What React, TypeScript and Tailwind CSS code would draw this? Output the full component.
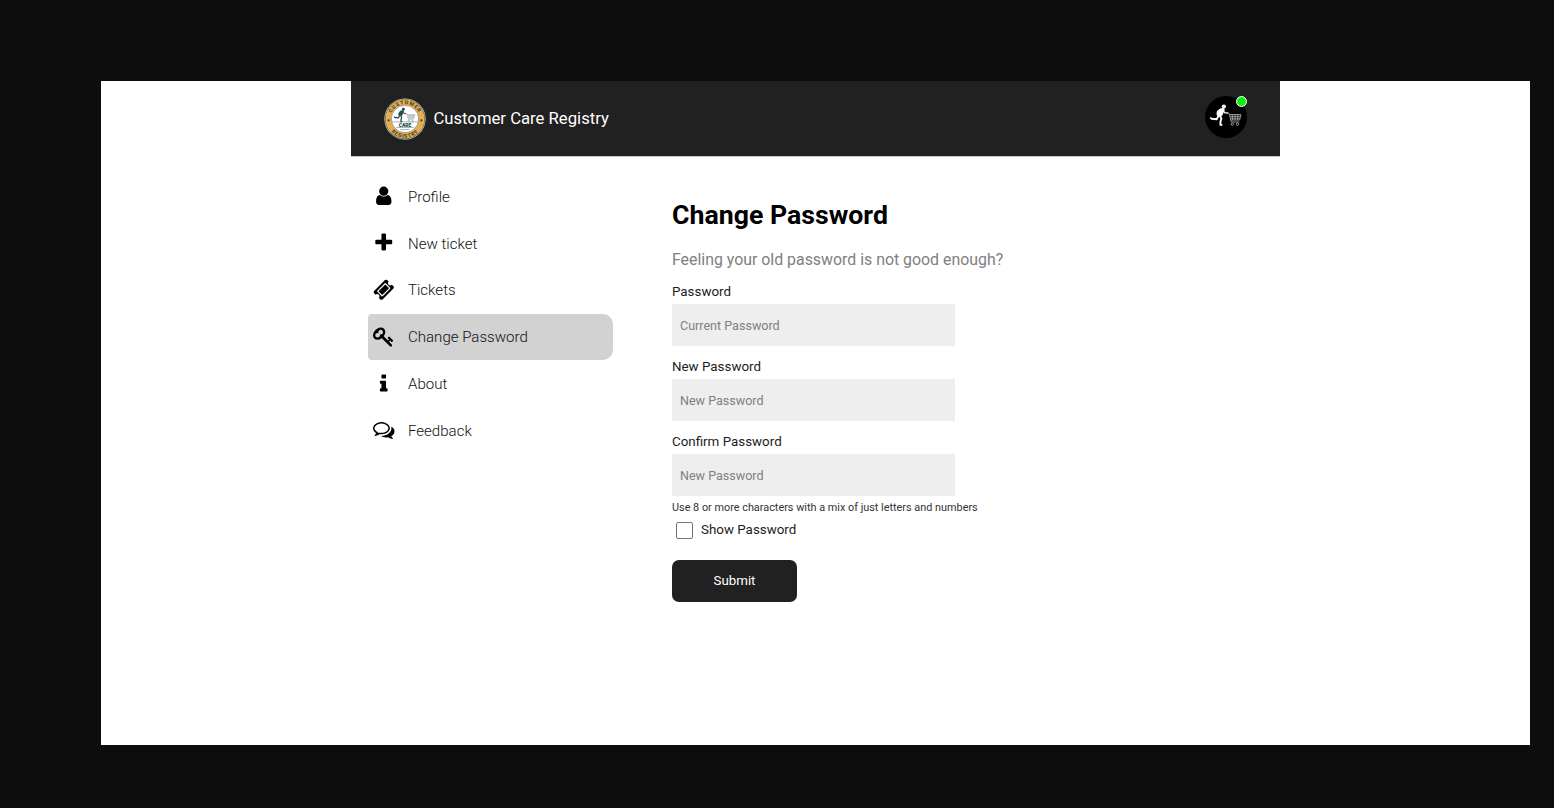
import React from "react";

const icons = {
  user: "M1536 1399q0 109-62.5 187t-150.5 78h-854q-88 0-150.5-78t-62.5-187q0-85 8.5-160.5t31.5-152 58.5-131 94-89 134.5-34.5q131 128 313 128t313-128q76 0 134.5 34.5t94 89 58.5 131 31.5 152 8.5 160.5zm-256-887q0 159-112.5 271.5t-271.5 112.5-271.5-112.5-112.5-271.5 112.5-271.5 271.5-112.5 271.5 112.5 112.5 271.5z",
  plus: "M1600 736v192q0 40-28 68t-68 28h-416v416q0 40-28 68t-68 28h-192q-40 0-68-28t-28-68v-416h-416q-40 0-68-28t-28-68v-192q0-40 28-68t68-28h416v-416q0-40 28-68t68-28h192q40 0 68 28t28 68v416h416q40 0 68 28t28 68z",
  ticket: "M1024 452l316 316-572 572-316-316zm-211 979l618-618q19-19 19-45t-19-45l-362-362q-18-18-45-18t-45 18l-618 618q-19 19-19 45t19 45l362 362q18 18 45 18t45-18zm889-637l-907 908q-37 37-90.5 37t-90.5-37l-126-126q56-56 56-136t-56-136-136-56-136 56l-125-126q-37-37-37-90.5t37-90.5l907-906q37-37 90.5-37t90.5 37l125 125q-56 56-56 136t56 136 136 56 136-56l126 125q37 37 37 90.5t-37 90.5z",
  key: "M832 512q0-80-56-136t-136-56-136 56-56 136q0 42 19 83-41-19-83-19-80 0-136 56t-56 136 56 136 136 56 136-56 56-136q0-42-19-83 41 19 83 19 80 0 136-56t56-136zm851 704q0 17-49 66t-66 49q-9 0-28.5-16t-36.5-33-38.5-40-24.5-26l-96 96 220 220q28 28 28 68 0 42-39 81t-81 39q-40 0-68-28l-671-671q-176 131-365 131-163 0-265.5-102.5t-102.5-265.5q0-160 95-313t248-248 313-95q163 0 265.5 102.5t102.5 265.5q0 189-131 365l355 355 96-96q-3-3-26-24.5t-40-38.5-33-36.5-16-28.5q0-17 49-66t66-49q13 0 23 10 6 6 46 44.5t82 79.5 86.5 86 73 78 28.5 41z",
  info: "M1216 1344v128q0 26-19 45t-45 19h-512q-26 0-45-19t-19-45v-128q0-26 19-45t45-19h64v-384h-64q-26 0-45-19t-19-45v-128q0-26 19-45t45-19h384q26 0 45 19t19 45v576h64q26 0 45 19t19 45zm-128-1152v192q0 26-19 45t-45 19h-256q-26 0-45-19t-19-45v-192q0-26 19-45t45-19h256q26 0 45 19t19 45z",
  comments: "M704 384q-153 0-286 52t-211.5 141-78.5 191q0 82 53 158t149 132l97 56-35 84q34-20 62-39l44-31 53 10q78 14 153 14 153 0 286-52t211.5-141 78.5-191-78.5-191-211.5-141-286-52zm0-128q191 0 353.5 68.5t256.5 186.5 94 257-94 257-256.5 186.5-353.5 68.5q-86 0-176-16-124 88-278 128-36 9-86 16h-3q-11 0-20.5-8t-11.5-21q-1-3-1-6.5t.5-6.5 2-6l2.5-5 3.5-5.5 4-5 4.5-5 4-4.5q5-6 23-25t26-29.5 22.5-29 25-38.5 20.5-44q-124-72-195-177t-71-224q0-139 94-257t256.5-186.5 353.5-68.5zm822 1169q10 24 20.5 44t25 38.5 22.5 29 26 29.5 23 25q1 1 4 4.5t4.5 5 4 5 3.5 5.5l2.5 5 2 6 .5 6.5-1 6.5q-3 14-13 22t-22 7q-50-7-86-16-154-40-278-128-90 16-176 16-271 0-472-132 58 4 88 4 161 0 309-45t264-129q125-92 192-212t67-254q0-77-23-152 129 71 204 178t75 230q0 120-71 224.5t-195 176.5z",
};

const menu: { label: string; icon: keyof typeof icons; active?: boolean }[] = [
  { label: "Profile", icon: "user" },
  { label: "New ticket", icon: "plus" },
  { label: "Tickets", icon: "ticket" },
  { label: "Change Password", icon: "key", active: true },
  { label: "About", icon: "info" },
  { label: "Feedback", icon: "comments" },
];

const fields = [
  { label: "Password", placeholder: "Current Password" },
  { label: "New Password", placeholder: "New Password" },
  { label: "Confirm Password", placeholder: "New Password" },
];

/* Runner pushing a shopping cart, drawn in a 42x42 box. */
function Shopper({ runner, cart }: { runner: string; cart: string }) {
  return (
    <g>
      <circle cx="18.900" cy="10.600" r="2.100" fill={runner} />
      <path d="M14.800 12.900q2.200-1.400 4.400-.6l.4 1.600-2.300 5.600-3.600 1.500-2-1.700 1.400-3.800z" fill={runner} />
      <g fill="none" stroke={runner} strokeLinecap="round" strokeLinejoin="round">
        <path d="M15.300 13.200l-2.800 2.300-.3 2.700" strokeWidth="1.400" />
        <path d="M18.300 14l1 2.600 3.300.4" strokeWidth="1.400" />
        <path d="M13.600 19.600l-1.800 3.600-5.100-.4-.8-.7" strokeWidth="1.900" />
        <path d="M14.800 19.300l1.600 3.200-.9 3-.1 3.400h1.200" strokeWidth="1.900" />
      </g>
      <g fill="none" stroke={cart} strokeWidth=".8">
        <path d="M22.500 17.300h1.600l2.200 8.700h8M24.400 18.500h11.600l-1.400 5.500h-8.800M24.900 20.300h10.600M25.400 22.200h9.700M27.200 18.500l.4 5.500M30 18.500v5.500M33 18.500l-.5 5.500" />
        <circle cx="27.300" cy="28.200" r="1.200" />
        <circle cx="32.500" cy="28.200" r="1.200" />
      </g>
    </g>
  );
}

function Logo() {
  return (
    <svg viewBox="0 0 42 42" className="h-[42px] w-[42px] shrink-0">
      <defs>
        <path id="arc-top" d="M6.200 21a14.800 14.800 0 0 1 29.600 0" />
        <path id="arc-bottom" d="M2.300 21a18.700 18.700 0 0 0 37.400 0" />
      </defs>
      <circle cx="21" cy="21" r="20.600" fill="#e5e0cb" />
      <circle cx="21" cy="21" r="20.100" fill="#4b6058" />
      <circle cx="21" cy="21" r="19.500" fill="#e6ad52" />
      <circle cx="21" cy="21" r="13.700" fill="#fff" stroke="#78856f" strokeWidth=".7" />
      <g fontFamily="Roboto, sans-serif" fontWeight="900" fill="#4a4a35" textAnchor="middle">
        <text fontSize="5.200" letterSpacing=".8">
          <textPath href="#arc-top" startOffset="50%">CUSTOMER</textPath>
        </text>
        <text fontSize="5.200" letterSpacing=".8">
          <textPath href="#arc-bottom" startOffset="50%">REGISTRY</textPath>
        </text>
        <text x="21" y="28.600" fontSize="5" fill="#26484a">CARE</text>
      </g>
      <circle cx="4.700" cy="22.400" r="1.100" fill="#4a3b20" />
      <circle cx="37.300" cy="22.400" r="1.100" fill="#4a3b20" />
      <path d="M8 23.900h26M12 29.500h18M16.500 31.500h9" stroke="#6f8b8c" strokeWidth=".6" />
      <g transform="translate(6.500 4) scale(.68)">
        <Shopper runner="#264b50" cart="#8aa3a5" />
      </g>
    </svg>
  );
}

export default function App() {
  return (
    <div className="h-[808px] w-[1554px] overflow-hidden bg-[#0d0d0d] pt-[81px] pl-[101px] font-[Roboto,sans-serif]">
      <div className="h-[664px] w-[1429px] bg-white pl-[250px]">
        <div className="w-[929px]">
          <header className="flex h-[75px] items-center justify-between bg-[#212121] pr-[33px] pl-[33.400px] shadow-[0_1px_0_#c8c8c8]">
            <div className="flex items-center gap-[7px]">
              <Logo />
              <h1 className="text-[16.700px] leading-5 text-white">Customer Care Registry</h1>
            </div>
            <div className="relative -mt-1 h-[42px] w-[42px]">
              <svg viewBox="0 0 42 42" className="h-[42px] w-[42px]">
                <circle cx="21" cy="21" r="21" fill="#000" />
                <Shopper runner="#fff" cart="#b0b0b0" />
              </svg>
              <span className="absolute top-0 right-0 h-[11px] w-[11px] rounded-full border border-white bg-[#10f010]" />
            </div>
          </header>

          <div className="flex">
            <nav className="w-[262px] pt-[17.200px] pl-[17px]">
              {menu.map((m) => (
                <a
                  key={m.label}
                  className={`flex h-[46.8px] items-center rounded-l-[4px] rounded-r-[10px] pl-[5px] ${m.active ? "bg-[#d2d2d2]" : ""}`}
                >
                  <svg viewBox="0 0 1792 1792" className="-mt-px h-[21.500px] w-[21.500px] shrink-0 fill-black">
                    <path d={icons[m.icon]} />
                  </svg>
                  <span className="ml-[13.500px] pt-[0.800px] text-[15.050px] font-light text-[#111]">{m.label}</span>
                </a>
              ))}
            </nav>

            <main className="ml-[59px] pt-[40px]">
              <h2 className="text-[26.700px] leading-[38px] font-bold text-black">Change Password</h2>
              <p className="mt-[16px] text-[15.880px] leading-5 text-[#808080]">
                Feeling your old password is not good enough?
              </p>
              <form className="mt-[13px]">
                {fields.map((f) => (
                  <label key={f.label} className="block h-[75px]">
                    <span className="block h-[20.900px] text-[13.360px] leading-[18px] text-[#1c1c1c]">{f.label}</span>
                    <input
                      placeholder={f.placeholder}
                      className="block h-[42px] w-[283px] bg-[#eeeeee] px-2 pt-[2px] text-[12.550px] placeholder:text-[#808080]"
                    />
                  </label>
                ))}
                <p className="-mt-[10px] text-[10.860px] leading-[20px] text-[#333]">
                  Use 8 or more characters with a mix of just letters and numbers
                </p>
                <div className="mt-[3px] ml-[4px] flex h-[19px] items-center gap-[8px]">
                  <span className="h-[17px] w-[17px] rounded-[2px] border border-[#767676] bg-white" />
                  <span className="text-[13.360px] text-[#1c1c1c]">Show Password</span>
                </div>
                <button
                  type="button"
                  className="mt-[20px] h-[42px] w-[125px] rounded-[7px] bg-[#212121] text-[13.300px] text-white"
                >
                  Submit
                </button>
              </form>
            </main>
          </div>
        </div>
      </div>
    </div>
  );
}
